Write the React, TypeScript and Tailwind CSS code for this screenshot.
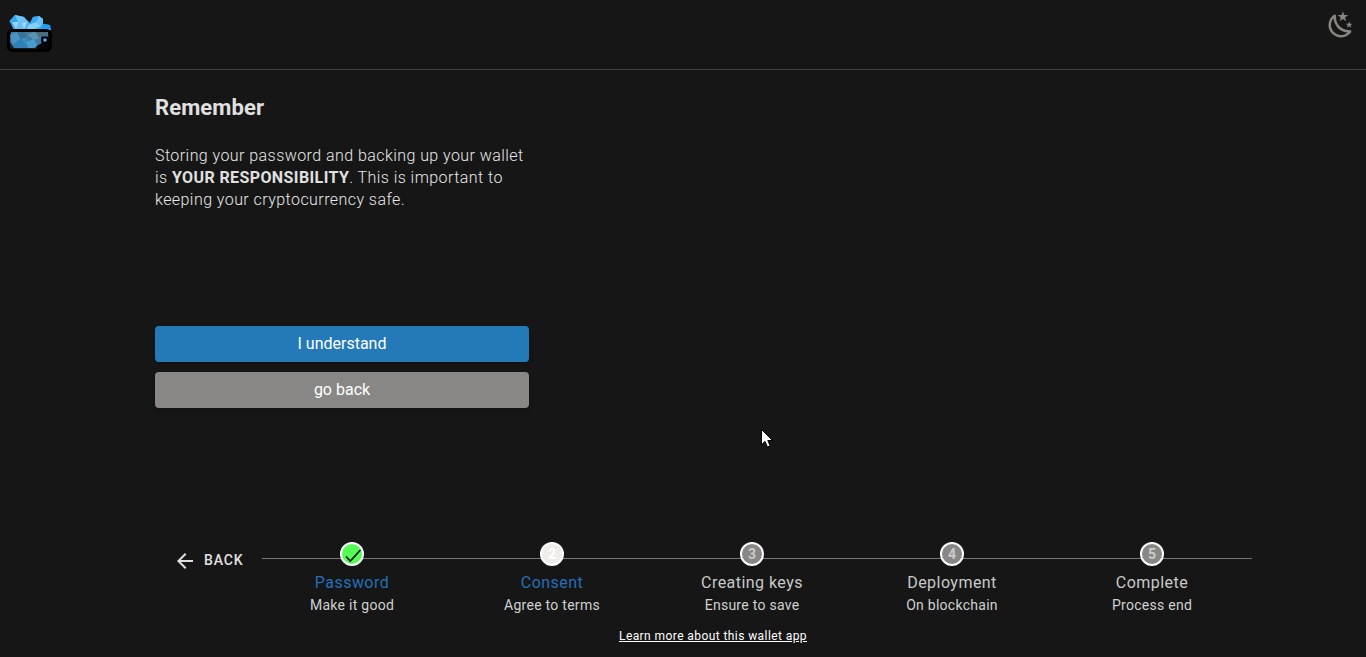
type StepState = "done" | "active" | "pending";

interface Step {
  title: string;
  caption: string;
  state: StepState;
}

const steps: Step[] = [
  { title: "Password", caption: "Make it good", state: "done" },
  { title: "Consent", caption: "Agree to terms", state: "active" },
  { title: "Creating keys", caption: "Ensure to save", state: "pending" },
  { title: "Deployment", caption: "On blockchain", state: "pending" },
  { title: "Complete", caption: "Process end", state: "pending" },
];

const circleStyles: Record<StepState, string> = {
  done: "bg-[#56fc56]",
  active: "bg-[#efecec] text-white",
  pending: "bg-[#898785] text-[#cbcbcb]",
};

function WalletLogo() {
  return (
    <svg width="46" height="40" viewBox="0 0 46 40" aria-hidden="true">
      <path d="M2.5 7 8 1 17 3 21 7 23 9 26 3 32 2 36 5 36 10 43 11 44 16H7Z" fill="#42aef4" />
      <path d="M2.5 7 8 1 11 8 8 14Z" fill="#35a5ee" />
      <path d="M8 1 17 3 20 8 11 8Z" fill="#6cc4fa" />
      <path d="M5 8 12 8 9 15Z" fill="#9ad5f6" />
      <path d="M12 8 21 7 18 15H9Z" fill="#67bff5" />
      <path d="M15 9 20 8 17 15Z" fill="#a8d9f3" />
      <path d="M26 3 32 2 30 8 22 12Z" fill="#3ba7f3" />
      <path d="M32 2 36 5 35 12 29 8Z" fill="#65c2fb" />
      <path d="M21 11 29 8 34 12 28 15H20Z" fill="#83cff8" />
      <path d="M36 10 43 11 43 15H33Z" fill="#239df4" />
      <rect x="1.4" y="16.4" width="42" height="20" rx="4" fill="#171d21" stroke="#000" strokeWidth="3" />
      <path d="M4 18H41V23H34V28L40 29 31 31 28 34H7L3 28Z" fill="#3d7ca3" />
      <path d="M3 21 10 18 14 25 6 31Z" fill="#4a93c2" />
      <path d="M10 18H18L20 24 14 26Z" fill="#3b7197" />
      <path d="M6 30 14 25 19 31 15 34H8Z" fill="#2f7fb8" />
      <path d="M14 25 20 23 19 31Z" fill="#3a8cc4" />
      <path d="M20 21 27 18 35 23 27 26Z" fill="#5a92b2" />
      <path d="M19 28 27 25 30 31 27 34H21Z" fill="#479cd0" />
      <path d="M29 18H40V22H34L32 24Z" fill="#4b6c7c" />
      <path d="M35 29 42 28V35H30V32Z" fill="#050607" />
      <rect x="35.5" y="23.5" width="5" height="5" fill="#57bdf9" stroke="#000" strokeWidth="2" />
    </svg>
  );
}

function NightIcon() {
  return (
    <svg width="30" height="30" viewBox="0 0 24 24" fill="#888683" aria-hidden="true">
      <path d="M17.75,4.09L15.22,6.03L16.13,9.09L13.5,7.28L10.87,9.09L11.78,6.03L9.25,4.09L12.44,4L13.5,1L14.56,4L17.75,4.09M21.25,11L19.61,12.25L20.2,14.23L18.5,13.06L16.8,14.23L17.39,12.25L15.75,11L17.81,10.95L18.5,9L19.19,10.95L21.25,11M18.97,15.95C19.8,15.87 20.69,17.05 20.16,17.8C19.84,18.25 19.5,18.67 19.08,19.07C15.17,23 8.84,23 4.94,19.07C1.03,15.17 1.03,8.83 4.94,4.93C5.34,4.53 5.76,4.17 6.21,3.85C6.96,3.32 8.14,4.21 8.06,5.04C7.79,7.9 8.75,10.87 10.95,13.06C13.14,15.26 16.1,16.22 18.97,15.95M17.33,17.97C14.5,17.81 11.7,16.64 9.53,14.5C7.36,12.31 6.2,9.5 6.04,6.68C3.23,9.82 3.34,14.64 6.35,17.66C9.37,20.67 14.19,20.78 17.33,17.97Z" />
    </svg>
  );
}

function StepItem({ step, number }: { step: Step; number: number }) {
  const titleColor = step.state === "pending" ? "text-[#c9c9c9]" : "text-[#246fb9]";
  return (
    <li className="flex w-[200px] flex-col items-center">
      <span
        className={`relative z-10 flex size-6 items-center justify-center rounded-full border-2 border-white text-sm leading-none ${circleStyles[step.state]} ${step.state === "active" ? "font-black" : "font-bold"}`}
      >
        {step.state === "done" ? (
          <svg className="shrink-0" width="20" height="20" viewBox="0 0 20 20" fill="none" aria-hidden="true">
            <path d="M4 12.5 8.3 17 18.5 6" stroke="#061206" strokeWidth="1.7" />
          </svg>
        ) : (
          number
        )}
      </span>
      <span className={`mt-[5px] text-base leading-6 tracking-[0.46px] ${titleColor}`}>{step.title}</span>
      <span className="text-sm leading-5 tracking-[0.27px] text-[#d0d0d0]">{step.caption}</span>
    </li>
  );
}

export default function App() {
  return (
    <div className="flex h-[657px] w-full flex-col overflow-hidden bg-[#161616] font-['Roboto',sans-serif] text-[#e0e0e0]">
      <header className="flex h-[70px] shrink-0 items-start justify-between border-b border-[#414141] pl-[7px] pr-[10.5px] pt-[9.5px]">
        <div className="pt-[4.5px]">
          <WalletLogo />
        </div>
        <button aria-label="Toggle theme">
          <NightIcon />
        </button>
      </header>

      <main className="ml-[155px] w-[374px] pt-6">
        <h1 className="text-[22px] font-bold leading-7 tracking-[0.1px]">Remember</h1>
        <p className="mt-[23px] h-[181px] text-base font-light leading-[22px] tracking-[0.44px] text-[#e8e8e8]">
          Storing your password and backing up your wallet is{" "}
          <strong className="font-bold tracking-[0.4px] text-[#e0e0e0]">YOUR RESPONSIBILITY</strong>. This is important to
          keeping your cryptocurrency safe.
        </p>
        <div className="flex flex-col gap-2.5">
          <button className="h-9 rounded-[4px] bg-[#247ab9] pb-px text-base text-white shadow-md">I understand</button>
          <button className="h-9 rounded-[4px] bg-[#898785] pb-px text-base text-white shadow-md">go back</button>
        </div>
      </main>

      <footer className="mt-auto flex h-[123px] flex-col pl-[173px]">
        <div className="flex h-[86px] pt-2">
          <button className="mt-[6px] flex h-6 w-[79px] items-center gap-[7px] text-sm font-medium tracking-[0.85px]">
            <svg className="mt-0.5 shrink-0" width="24" height="24" viewBox="0 0 24 24" fill="currentColor" aria-hidden="true">
              <path d="M20 11H7.83l5.59-5.59L12 4l-8 8 8 8 1.41-1.41L7.83 13H20v-2z" />
            </svg>
            BACK
          </button>
          <div className="relative">
            <div className="absolute left-[10px] top-4 h-px w-[990px] bg-[#777777]" />
            <ol className="flex">
              {steps.map((step, index) => (
                <StepItem key={step.title} step={step} number={index + 1} />
              ))}
            </ol>
          </div>
        </div>
        <a
          href="#about"
          className="ml-[446px] mt-2 self-start text-xs leading-4 tracking-[0.42px] text-white underline underline-offset-1"
        >
          Learn more about this wallet app
        </a>
      </footer>

      <svg className="absolute left-[761px] top-[429px]" width="13" height="20" viewBox="0 0 13 20" aria-hidden="true">
        <path d="M.5.5V15.7L4 12.4 6.4 18 9.1 16.8 6.8 11.5H11.5Z" fill="#fff" stroke="#000" />
      </svg>
    </div>
  );
}
